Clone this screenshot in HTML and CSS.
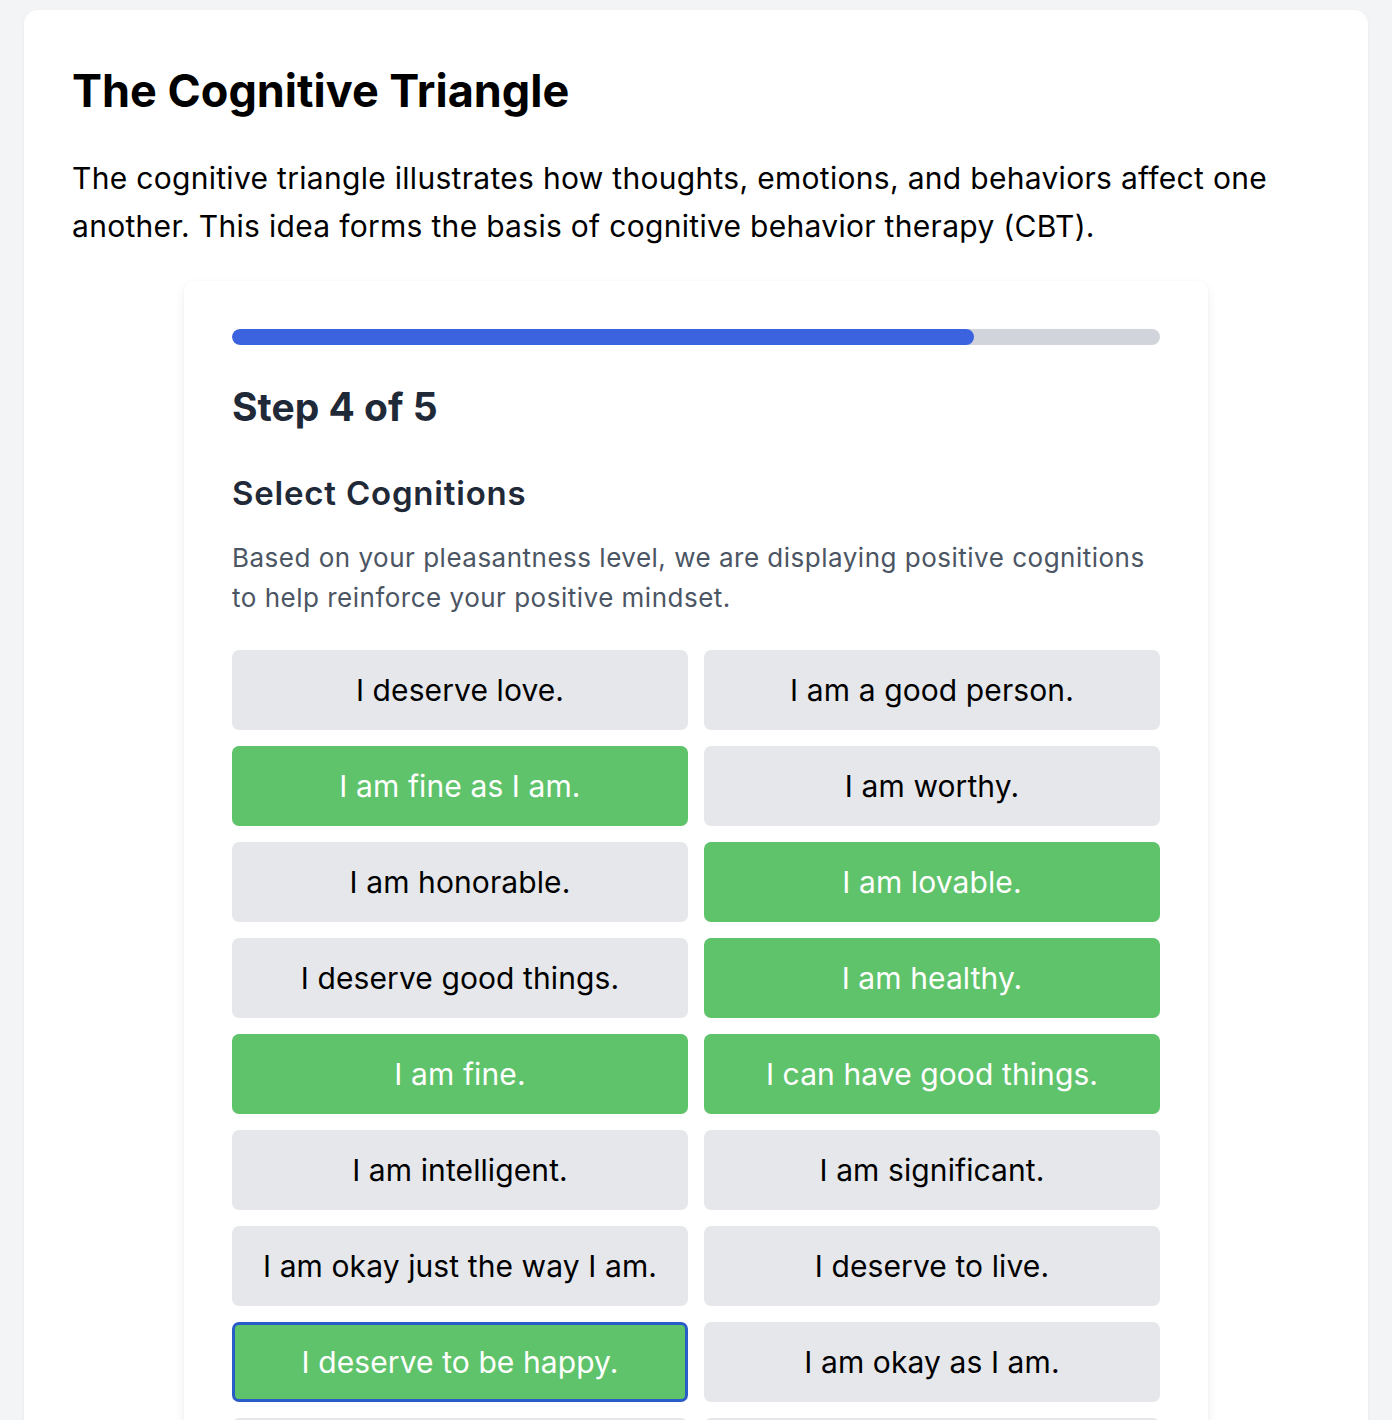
FILE: index.html
```html
<!DOCTYPE html>
<html lang="en">
<head>
<meta charset="utf-8">
<title>The Cognitive Triangle</title>
<link rel="stylesheet" href="styles.css">
</head>
<body>
<main class="page-card">
  <h1 class="title">The Cognitive Triangle</h1>
  <p class="intro">The cognitive triangle illustrates how thoughts, emotions, and behaviors affect one another. This idea forms the basis of cognitive behavior therapy (CBT).</p>
  <section class="wizard">
    <div class="progress"><div class="progress-fill" style="width: 80%"></div></div>
    <h2 class="step">Step 4 of 5</h2>
    <h3 class="section-title">Select Cognitions</h3>
    <p class="desc">Based on your pleasantness level, we are displaying positive cognitions to help reinforce your positive mindset.</p>
    <div class="options">
      <button class="opt">I deserve love.</button>
      <button class="opt">I am a good person.</button>
      <button class="opt selected">I am fine as I am.</button>
      <button class="opt">I am worthy.</button>
      <button class="opt">I am honorable.</button>
      <button class="opt selected">I am lovable.</button>
      <button class="opt">I deserve good things.</button>
      <button class="opt selected">I am healthy.</button>
      <button class="opt selected">I am fine.</button>
      <button class="opt selected">I can have good things.</button>
      <button class="opt">I am intelligent.</button>
      <button class="opt">I am significant.</button>
      <button class="opt">I am okay just the way I am.</button>
      <button class="opt">I deserve to live.</button>
      <button class="opt selected focused">I deserve to be happy.</button>
      <button class="opt">I am okay as I am.</button>
      <button class="opt">I am good enough.</button>
      <button class="opt">I am capable.</button>
    </div>
  </section>
</main>
</body>
</html>
```

FILE: styles.css
```css
* { box-sizing: border-box; }
html, body { margin: 0; }
body {
  background: #f3f4f6;
  padding: 10px 24px 40px;
  font-family: Inter, "Noto Sans", "Liberation Sans", sans-serif;
  color: #000;
}
.page-card {
  background: #fff;
  border-radius: 14px;
  box-shadow: 0 1px 3px rgba(0,0,0,0.06);
  padding: 54px 48px 48px;
}
.title {
  margin: 0;
  font-size: 45px;
  line-height: 54px;
  font-weight: 700;
  letter-spacing: 0;
}
.intro {
  margin: 36px 0 0;
  font-size: 30px;
  line-height: 48px;
  font-weight: 400;
  letter-spacing: 0.3px;
}
.wizard {
  width: 1024px;
  margin: 31px auto 0;
  background: #fff;
  border-radius: 10px;
  box-shadow: 0 4px 12px rgba(0,0,0,0.06), 0 1px 3px rgba(0,0,0,0.04);
  padding: 48px;
}
.progress {
  height: 16px;
  background: #d1d5db;
  border-radius: 8px;
  overflow: hidden;
}
.progress-fill {
  height: 100%;
  background: #3b63e0;
  border-radius: 8px;
}
.step {
  margin: 38px 0 0;
  font-size: 39px;
  line-height: 48px;
  font-weight: 700;
  color: #1f2937;
}
.section-title {
  margin: 42px 0 0;
  font-size: 33px;
  line-height: 40px;
  font-weight: 600;
  letter-spacing: 0.8px;
  color: #1f2937;
}
.desc {
  margin: 25px 0 0;
  font-size: 26px;
  line-height: 40px;
  letter-spacing: 0.5px;
  color: #4b5563;
}
.options {
  margin-top: 32px;
  display: grid;
  grid-template-columns: 1fr 1fr;
  gap: 16px;
}
.opt {
  height: 80px;
  border: none;
  border-radius: 7px;
  background: #e5e7eb;
  color: #000;
  font-family: inherit;
  font-size: 30px;
  font-weight: 400;
  letter-spacing: 0.1px;
  padding: 0 16px;
  text-align: center;
}
.opt.selected {
  background: #5fc36b;
  color: #fff;
}
.opt.focused {
  border: 3px solid #2a5cc8;
}
```
